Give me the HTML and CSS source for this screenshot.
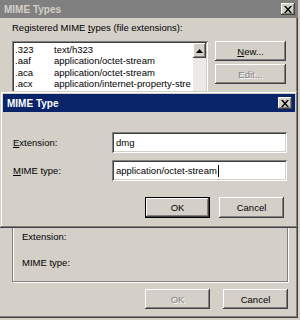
FILE: index.html
```html
<!DOCTYPE html>
<html>
<head>
<meta charset="utf-8">
<link rel="stylesheet" href="styles.css">
</head>
<body>
<div class="win">
  <div class="tbar inactive">
    <span class="ttext">MIME Types</span>
    <span class="xbtn"><svg width="8" height="7" viewBox="0 0 8 7"><path d="M0 0h2l2 2.5L6 0h2L5 3.5 8 7H6L4 4.5 2 7H0l3-3.5z" fill="#000"/></svg></span>
  </div>
  <div class="wbody">
    <div class="lbl">Registered MIME <u>t</u>ypes (file extensions):</div>
    <div class="toprow">
      <div class="list">
        <div class="rows">
          <div class="row"><span class="c1">.323</span><span class="c2">text/h323</span></div>
          <div class="row"><span class="c1">.aaf</span><span class="c2">application/octet-stream</span></div>
          <div class="row"><span class="c1">.aca</span><span class="c2">application/octet-stream</span></div>
          <div class="row"><span class="c1">.acx</span><span class="c2">application/internet-property-stre</span></div>
        </div>
        <div class="vscroll">
          <div class="sbtn"><svg width="7" height="4" viewBox="0 0 7 4"><path d="M3.5 0L7 4H0z" fill="#000"/></svg></div>
          <div class="track"></div>
        </div>
      </div>
      <div class="sidebtns">
        <div class="btn"><u>N</u>ew...</div>
        <div class="btn dis">Edit...</div>
      </div>
    </div>
    <div class="group">
      <div class="glbl">Extension:</div>
      <div class="glbl">MIME type:</div>
    </div>
    <div class="foot">
      <div class="btn fbtn dis">OK</div>
      <div class="btn fbtn">Cancel</div>
    </div>
  </div>

  <div class="dlg">
    <div class="tbar active">
      <span class="ttext">MIME Type</span>
      <span class="xbtn"><svg width="8" height="7" viewBox="0 0 8 7"><path d="M0 0h2l2 2.5L6 0h2L5 3.5 8 7H6L4 4.5 2 7H0l3-3.5z" fill="#000"/></svg></span>
    </div>
    <div class="dbody">
      <div class="field">
        <span class="flbl"><u>E</u>xtension:</span>
        <div class="inp">dmg</div>
      </div>
      <div class="field">
        <span class="flbl"><u>M</u>IME type:</span>
        <div class="inp">application/octet-stream<span class="caret"></span></div>
      </div>
      <div class="dfoot">
        <div class="btn dbtn def">OK</div>
        <div class="btn dbtn">Cancel</div>
      </div>
    </div>
  </div>
</div>
</body>
</html>
```

FILE: styles.css
```css
body {
  margin: 0;
  background: #d4d0c8;
  font-family: "Liberation Sans", Arial, sans-serif;
  font-size: 9.5px;
  color: #000;
}

.win {
  position: relative;
  width: 298px;
  height: 318px;
  box-sizing: border-box;
  background: #d4d0c8;
  box-shadow: inset -1px -1px #404040, inset -2px -2px #808080;
  display: flex;
  flex-direction: column;
}

.tbar {
  height: 18px;
  display: flex;
  align-items: center;
  justify-content: space-between;
  padding: 0 3px 0 4px;
  box-sizing: border-box;
  flex: none;
}

.tbar.inactive {
  background: #808080;
  color: #d4d0c8;
}

.tbar.active {
  background: #0a246a;
  color: #fff;
}

.ttext {
  font-weight: bold;
  font-size: 10px;
}

.xbtn {
  width: 14px;
  height: 12px;
  background: #d4d0c8;
  box-shadow: inset -1px -1px #404040, inset 1px 1px #fff, inset -2px -2px #808080;
  display: flex;
  align-items: center;
  justify-content: center;
}

.wbody {
  padding: 0 10px 0 12px;
  display: flex;
  flex-direction: column;
}

.lbl {
  margin-top: 3px;
  line-height: 13px;
}

.toprow {
  display: flex;
  margin-top: 7px;
  gap: 7px;
}

.list {
  width: 196px;
  height: 150px;
  box-sizing: border-box;
  background: #fff;
  box-shadow: inset 1px 1px #808080, inset -1px -1px #fff, inset 2px 2px #404040, inset -2px -2px #d4d0c8;
  padding: 2px;
  display: flex;
  overflow: hidden;
}

.rows {
  flex: 1;
  overflow: hidden;
  padding-top: 1px;
}

.row {
  display: flex;
  line-height: 11.3px;
  white-space: nowrap;
}

.c1 {
  width: 39px;
  padding-left: 1px;
  flex: none;
}

.vscroll {
  width: 13px;
  display: flex;
  flex-direction: column;
}

.sbtn {
  height: 15px;
  background: #d4d0c8;
  box-shadow: inset -1px -1px #404040, inset 1px 1px #fff, inset -2px -2px #808080;
  display: flex;
  align-items: center;
  justify-content: center;
}

.track {
  flex: 1;
  background: #ebe9e5;
}

.sidebtns {
  display: flex;
  flex-direction: column;
  gap: 3px;
}

.btn {
  height: 20px;
  box-sizing: border-box;
  background: #d4d0c8;
  box-shadow: inset -1px -1px #404040, inset 1px 1px #fff, inset -2px -2px #808080;
  display: flex;
  align-items: center;
  justify-content: center;
}

.sidebtns .btn {
  width: 71px;
}

.dis {
  color: #808080;
  text-shadow: 1px 1px #fff;
}

.group {
  margin-top: 8px;
  width: 276px;
  height: 83px;
  box-sizing: border-box;
  border: 1px solid #808080;
  box-shadow: 1px 1px #fff, inset 1px 1px #fff;
  padding: 30px 0 0 9px;
  display: flex;
  flex-direction: column;
  gap: 13px;
}

.glbl {
  line-height: 13px;
}

.foot {
  display: flex;
  justify-content: flex-end;
  gap: 13px;
  margin-top: 7px;
  width: 276px;
}

.fbtn {
  width: 65px;
}

.dlg {
  position: absolute;
  left: 0;
  top: 91px;
  width: 298px;
  height: 137px;
  box-sizing: border-box;
  padding: 3px;
  background: #d4d0c8;
  box-shadow: inset -1px -1px #404040, inset 1px 1px #d4d0c8, inset -2px -2px #808080, inset 2px 2px #fff;
  display: flex;
  flex-direction: column;
}

.dbody {
  padding: 20px 10px 0 10px;
  display: flex;
  flex-direction: column;
  gap: 7px;
}

.field {
  display: grid;
  grid-template-columns: 99px 175px;
  align-items: center;
}

.inp {
  height: 21px;
  box-sizing: border-box;
  background: #fff;
  box-shadow: inset 1px 1px #808080, inset -1px -1px #fff, inset 2px 2px #404040, inset -2px -2px #d4d0c8;
  padding: 0 4px;
  display: flex;
  align-items: center;
  white-space: nowrap;
}

.caret {
  display: inline-block;
  width: 1px;
  height: 12px;
  background: #000;
  margin-left: 1px;
}

.dfoot {
  display: flex;
  justify-content: flex-end;
  gap: 9px;
  margin-top: 9px;
  padding-right: 1px;
}

.dbtn {
  width: 65px;
  height: 21px;
}

.def {
  box-shadow: inset 0 0 0 1px #000, inset -2px -2px #404040, inset 2px 2px #fff, inset -3px -3px #808080;
}
```
